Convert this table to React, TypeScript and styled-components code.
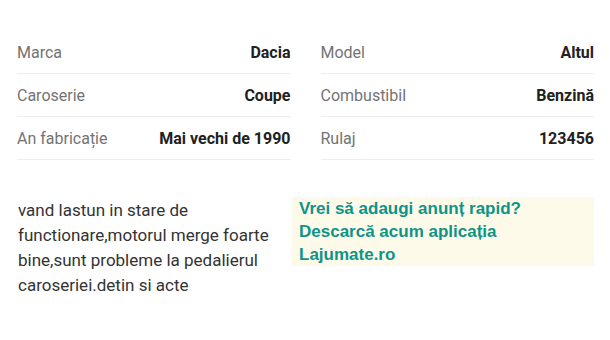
import * as React from 'react';
import styled, {createGlobalStyle} from 'styled-components';

const GlobalStyle = createGlobalStyle`
  body {
    margin: 0;
    background: #fff;
    font-family: Roboto, "Liberation Sans", sans-serif;
  }
`;

const Page = styled.div`
  padding: 31px 16px 0 17px;
`;

const Specs = styled.div`
  display: grid;
  grid-template-columns: 1fr 1fr;
  column-gap: 30px;
`;

const Row = styled.div`
  display: flex;
  justify-content: space-between;
  align-items: center;
  height: 42px;
  border-bottom: 1px solid #ededed;
  font-size: 16px;
  > .label {
    color: #737373;
  }
  > .value {
    color: #212121;
    font-weight: 700;
  }
`;

const Details = styled.div`
  display: grid;
  grid-template-columns: 274px 1fr;
  align-items: start;
  margin-top: 38px;
`;

const Description = styled.p`
  margin: 0;
  padding-left: 1px;
  font-size: 17px;
  line-height: 25px;
  color: #333;
`;

const Promo = styled.div`
  background: #fdfaea;
  padding: 0 7px;
  margin-top: -1px;
  margin-left: 1px;
  font-family: "Liberation Sans", Arial, sans-serif;
  font-weight: 700;
  font-size: 17px;
  line-height: 23px;
  color: #0d9488;
`;

const specs: [string, string][] = [
  ['Marca', 'Dacia'],
  ['Model', 'Altul'],
  ['Caroserie', 'Coupe'],
  ['Combustibil', 'Benzină'],
  ['An fabricație', 'Mai vechi de 1990'],
  ['Rulaj', '123456'],
];

const App = () => {
  return (
    <Page>
      <GlobalStyle/>
      <Specs>
        {specs.map(([label, value]) => (
          <Row key={label}>
            <span className="label">{label}</span>
            <span className="value">{value}</span>
          </Row>
        ))}
      </Specs>
      <Details>
        <Description>
          vand lastun in stare de functionare,motorul merge foarte bine,sunt probleme la pedalierul caroseriei.detin si acte
        </Description>
        <Promo>
          Vrei să adaugi anunț rapid?<br/>
          Descarcă acum aplicația<br/>
          Lajumate.ro
        </Promo>
      </Details>
    </Page>
  );
};

export default App;
